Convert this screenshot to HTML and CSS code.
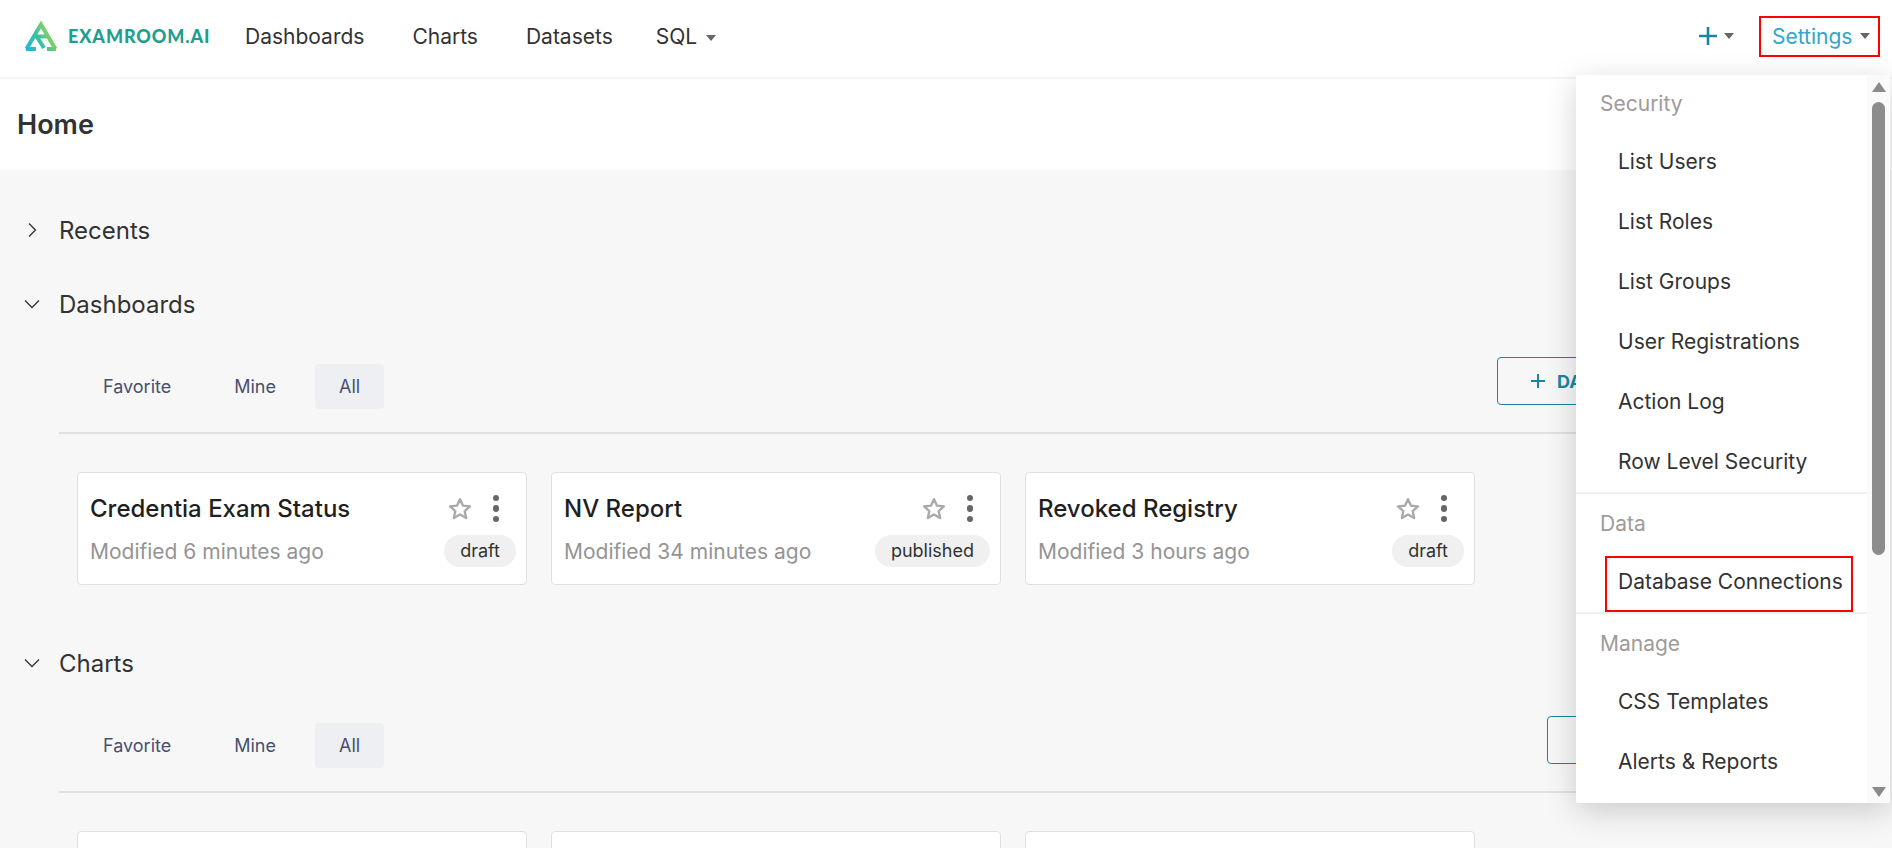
FILE: index.html
```html
<!DOCTYPE html>
<html lang="en">
<head>
  <meta charset="UTF-8" />
  <title>Home</title>
  <link rel="stylesheet" href="styles.css">
</head>
<body>
  <div class="navbar">
    <div class="brand">
      <svg class="brand-mark" width="36" height="32" viewBox="0 0 36 32">
        <defs>
          <linearGradient id="markGrad" gradientUnits="userSpaceOnUse" x1="0" y1="31" x2="36" y2="10">
            <stop offset="0" stop-color="#1db4e8"/>
            <stop offset="0.5" stop-color="#3cc39a"/>
            <stop offset="1" stop-color="#c8e02a"/>
          </linearGradient>
        </defs>
        <path fill="none" stroke="url(#markGrad)" stroke-width="4" d="M3.5 29 L18 4.5 L32.5 29 M24 29 H33 M3 29 H13 M11 16.5 H25 M14 17 L21 28"/>
      </svg>
      <span class="brand-name">EXAMROOM.AI</span>
    </div>
    <nav class="nav-links">
      <a>Dashboards</a>
      <a>Charts</a>
      <a>Datasets</a>
      <a class="nav-sql">SQL <i class="caret"></i></a>
    </nav>
    <div class="nav-right">
      <span class="nav-plus">
        <svg width="18" height="18" viewBox="0 0 18 18"><path d="M9 0v18M0 9h18" stroke="#1a85a0" stroke-width="2.6" fill="none"/></svg>
        <i class="caret"></i>
      </span>
      <span class="nav-settings">Settings <i class="caret"></i></span>
    </div>
  </div>

  <div class="subheader">Home</div>

  <div class="main">
    <div class="section-head section-collapsed">
      <svg class="chevron" width="16" height="16" viewBox="0 0 16 16"><path d="M5 1.5 L11.5 8 L5 14.5" stroke="#323232" stroke-width="1.3" fill="none"/></svg>
      <span>Recents</span>
    </div>

    <div class="section-head">
      <svg class="chevron" width="16" height="16" viewBox="0 0 16 16"><path d="M1 4.5 L8 11.5 L15 4.5" stroke="#323232" stroke-width="1.3" fill="none"/></svg>
      <span>Dashboards</span>
    </div>
    <div class="section-body">
      <div class="toolbar">
        <div class="tabs">
          <a class="tab">Favorite</a>
          <a class="tab">Mine</a>
          <a class="tab active">All</a>
        </div>
        <a class="add-btn add-dashboard">
          <svg width="16" height="16" viewBox="0 0 16 16"><path d="M8 1v14M1 8h14" stroke="#1a85a0" stroke-width="2" fill="none"/></svg>
          DASHBOARD
        </a>
      </div>
      <div class="cards">
        <div class="card">
          <div class="card-row">
            <div class="card-title">Credentia Exam Status</div>
            <div class="card-actions">
              <svg class="star" width="26" height="26" viewBox="0 0 26 26"><path d="M13 3.2l2.9 6.4 7 .8-5.2 4.7 1.4 6.9-6.1-3.5-6.1 3.5 1.4-6.9-5.2-4.7 7-.8z" stroke="#aaa" stroke-width="2.4" fill="none" stroke-linejoin="round"/></svg>
              <span class="dots"><i></i><i></i><i></i></span>
            </div>
          </div>
          <div class="card-row">
            <div class="card-meta">Modified 6 minutes ago</div>
            <span class="pill">draft</span>
          </div>
        </div>
        <div class="card">
          <div class="card-row">
            <div class="card-title">NV Report</div>
            <div class="card-actions">
              <svg class="star" width="26" height="26" viewBox="0 0 26 26"><path d="M13 3.2l2.9 6.4 7 .8-5.2 4.7 1.4 6.9-6.1-3.5-6.1 3.5 1.4-6.9-5.2-4.7 7-.8z" stroke="#aaa" stroke-width="2.4" fill="none" stroke-linejoin="round"/></svg>
              <span class="dots"><i></i><i></i><i></i></span>
            </div>
          </div>
          <div class="card-row">
            <div class="card-meta">Modified 34 minutes ago</div>
            <span class="pill">published</span>
          </div>
        </div>
        <div class="card">
          <div class="card-row">
            <div class="card-title">Revoked Registry</div>
            <div class="card-actions">
              <svg class="star" width="26" height="26" viewBox="0 0 26 26"><path d="M13 3.2l2.9 6.4 7 .8-5.2 4.7 1.4 6.9-6.1-3.5-6.1 3.5 1.4-6.9-5.2-4.7 7-.8z" stroke="#aaa" stroke-width="2.4" fill="none" stroke-linejoin="round"/></svg>
              <span class="dots"><i></i><i></i><i></i></span>
            </div>
          </div>
          <div class="card-row">
            <div class="card-meta">Modified 3 hours ago</div>
            <span class="pill">draft</span>
          </div>
        </div>
      </div>
    </div>

    <div class="section-head section-charts">
      <svg class="chevron" width="16" height="16" viewBox="0 0 16 16"><path d="M1 4.5 L8 11.5 L15 4.5" stroke="#323232" stroke-width="1.3" fill="none"/></svg>
      <span>Charts</span>
    </div>
    <div class="section-body">
      <div class="toolbar">
        <div class="tabs">
          <a class="tab">Favorite</a>
          <a class="tab">Mine</a>
          <a class="tab active">All</a>
        </div>
        <a class="add-btn add-chart"></a>
      </div>
      <div class="cards">
        <div class="card"></div>
        <div class="card"></div>
        <div class="card"></div>
      </div>
    </div>
  </div>

  <div class="settings-menu">
    <div class="menu-list">
      <div class="menu-label">Security</div>
      <a class="menu-item">List Users</a>
      <a class="menu-item">List Roles</a>
      <a class="menu-item">List Groups</a>
      <a class="menu-item">User Registrations</a>
      <a class="menu-item">Action Log</a>
      <a class="menu-item">Row Level Security</a>
      <div class="menu-divider"></div>
      <div class="menu-label">Data</div>
      <a class="menu-item menu-marked">Database Connections</a>
      <div class="menu-divider"></div>
      <div class="menu-label">Manage</div>
      <a class="menu-item">CSS Templates</a>
      <a class="menu-item">Alerts &amp; Reports</a>
    </div>
    <div class="scroll-rail">
      <i class="arrow-up"></i>
      <div class="scroll-thumb"></div>
      <i class="arrow-down"></i>
    </div>
  </div>
</body>
</html>
```

FILE: styles.css
```css
* {
  box-sizing: border-box;
}
html, body {
  height: 100%;
}
body {
  margin: 0;
  overflow: hidden;
  font-family: 'Inter', sans-serif;
  color: #323232;
  background-color: #f7f7f7;
}
a {
  text-decoration: none;
  color: inherit;
}
.caret {
  display: inline-block;
  width: 0;
  height: 0;
  border-left: 5px solid transparent;
  border-right: 5px solid transparent;
  border-top: 6px solid #666;
  vertical-align: middle;
}

.navbar {
  display: flex;
  align-items: center;
  height: 79px;
  padding-left: 23px;
  padding-bottom: 5px;
  background-color: #fff;
  border-bottom: 2px solid #f4f4f4;
}
.brand {
  display: flex;
  align-items: center;
  width: 222px;
}
.brand-mark {
  margin-right: 9px;
}
.brand-name {
  font-family: 'Lato', sans-serif;
  font-size: 18px;
  font-weight: 900;
  letter-spacing: 0.9px;
  color: #1f9e8f;
}
.nav-links {
  display: flex;
  gap: 48px;
  font-size: 21px;
}
.nav-sql {
  margin-left: -5px;
}
.nav-sql .caret {
  margin-left: 3px;
}
.nav-right {
  display: flex;
  align-items: center;
  margin-left: auto;
  margin-right: 12px;
}
.nav-plus {
  display: flex;
  align-items: center;
  gap: 7px;
  margin-right: 25px;
}
.nav-settings {
  display: flex;
  align-items: center;
  justify-content: space-between;
  width: 121px;
  height: 41px;
  padding: 0 8px 0 11px;
  font-size: 21px;
  color: #2fa6cc;
  border: 2px solid #f00;
}

.subheader {
  height: 91px;
  padding: 31px 17px 0;
  background-color: #fff;
  font-size: 27px;
  font-weight: 600;
  line-height: 30px;
}

.main {
  padding: 0 16px 0 24px;
}
.section-head {
  display: flex;
  align-items: center;
  height: 30px;
  font-size: 24px;
  color: #323232;
}
.section-head span {
  margin-left: 19px;
}
.chevron {
  flex-shrink: 0;
}
.section-collapsed {
  margin-top: 45px;
  margin-bottom: 44px;
}
.section-charts {
  margin-top: 63px;
  margin-bottom: 1px;
}
.section-body {
  margin-left: 35px;
}
.toolbar {
  display: flex;
  align-items: flex-start;
  justify-content: space-between;
  height: 70px;
  margin-top: 45px;
  border-bottom: 2px solid #e0e0e0;
}
.tabs {
  display: flex;
  gap: 15px;
  margin-left: 20px;
}
.tab {
  display: flex;
  align-items: center;
  justify-content: center;
  height: 45px;
  padding: 0 24px;
  font-size: 18px;
  color: #484f6e;
  border-radius: 4px;
}
.tab.active {
  background-color: #eeeff3;
}
.add-btn {
  display: flex;
  align-items: center;
  gap: 11px;
  height: 48px;
  margin-top: -7px;
  padding: 0 32px;
  font-size: 18px;
  font-weight: 700;
  color: #1a85a0;
  border: 1.5px solid #1a85a0;
  border-radius: 4px;
}
.add-dashboard {
  width: 379px;
}
.add-chart {
  width: 329px;
}
.cards {
  display: flex;
  gap: 24px;
  margin-top: 38px;
  margin-left: 18px;
}
.card {
  display: flex;
  flex-direction: column;
  justify-content: center;
  gap: 12px;
  width: 450px;
  height: 113px;
  padding: 4px 10px 0 12px;
  background-color: #fff;
  border: 1px solid #e0e0e0;
  border-radius: 4px;
}
.card-row {
  display: flex;
  align-items: center;
  justify-content: space-between;
}
.card-title {
  font-size: 24px;
  font-weight: 500;
  color: #1f1f1f;
}
.card-actions {
  display: flex;
  align-items: center;
  gap: 20px;
  margin-right: 17px;
}
.dots {
  display: flex;
  flex-direction: column;
  gap: 4px;
}
.dots i {
  width: 6.5px;
  height: 6.5px;
  border-radius: 50%;
  background-color: #666;
}
.card-meta {
  font-size: 21px;
  color: #949494;
}
.pill {
  padding: 5px 16px;
  font-size: 18px;
  line-height: 22px;
  color: #323232;
  background-color: #f0f0f0;
  border-radius: 16px;
}

.settings-menu {
  position: absolute;
  top: 75px;
  left: 1576px;
  display: flex;
  width: 314px;
  height: 728px;
  overflow: hidden;
  background-color: #fff;
  border-radius: 2px;
  box-shadow: 0 8px 32px rgba(0, 0, 0, 0.18);
}
.menu-list {
  flex: 1;
}
.menu-label {
  height: 56px;
  padding-left: 24px;
  font-size: 21px;
  line-height: 58px;
  color: #a09a98;
}
.menu-divider {
  height: 2px;
  margin: 1px 0;
  background-color: #f0f0f0;
}
.menu-item {
  display: block;
  height: 60px;
  padding-left: 42px;
  font-size: 21px;
  line-height: 62px;
  color: #323232;
}
.menu-marked {
  height: 56px;
  margin: 5px 14px -1px 29px;
  padding-left: 11px;
  line-height: 48px;
  border: 2px solid #f00;
}
.scroll-rail {
  display: flex;
  flex-direction: column;
  align-items: center;
  width: 23px;
  background-color: #fafafa;
}
.scroll-thumb {
  width: 13px;
  height: 453px;
  margin-top: 10px;
  background-color: #8c8c8c;
  border-radius: 7px;
}
.arrow-up {
  width: 0;
  height: 0;
  margin-top: 7px;
  border-left: 7.5px solid transparent;
  border-right: 7.5px solid transparent;
  border-bottom: 10px solid #8a8a8a;
}
.arrow-down {
  width: 0;
  height: 0;
  margin-top: auto;
  margin-bottom: 6px;
  border-left: 7.5px solid transparent;
  border-right: 7.5px solid transparent;
  border-top: 10px solid #8a8a8a;
}
```
